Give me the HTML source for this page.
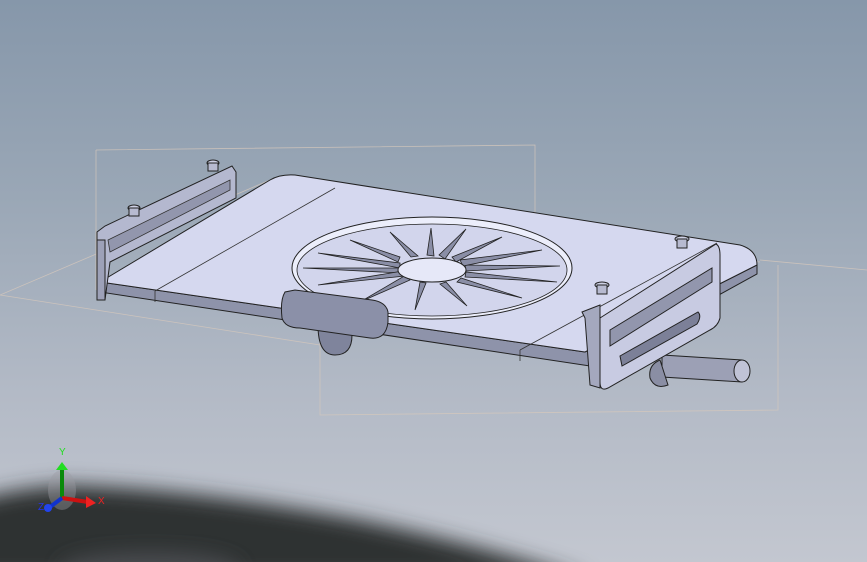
<!DOCTYPE html>
<html><head><meta charset="utf-8"><style>
html,body{margin:0;padding:0;width:867px;height:562px;overflow:hidden}
body{background:linear-gradient(180deg,#8697aa 0%,#9aa7b6 35%,#b3bac6 70%,#c3c7d0 100%)}
svg{position:absolute;left:0;top:0}
</style></head><body>
<svg width="867" height="562" viewBox="0 0 867 562" xmlns="http://www.w3.org/2000/svg">
<defs>
<filter id="bl" x="-50%" y="-50%" width="200%" height="200%"><feGaussianBlur stdDeviation="10"/></filter>
</defs>
<!-- shadow -->
<path d="M-40 580 L-40 505 Q10 488 70 485 Q200 490 360 520 Q480 545 590 580 Z" fill="#2e3033" filter="url(#bl)"/>
<ellipse cx="150" cy="570" rx="90" ry="18" fill="#4a4c50" filter="url(#bl)"/>
<!-- bounding lines -->
<g stroke="#d6c8bc" stroke-width="0.8" fill="none" opacity="0.8">
<path d="M96 150 L535 145 L535 240"/>
<path d="M96 150 L96 290"/>
<path d="M0 295 L270 180"/>
<path d="M320 300 L320 415 L778 410 L778 265"/>
<path d="M0 295 L320 345"/>
<path d="M760 260 L867 270"/>
<path d="M535 240 L760 262"/>
</g>
<!-- plate edge -->
<path d="M100 282 L585 352 L757 265 L757 274 L590 366 L100 292 Z" fill="#8e93aa" stroke="#222" stroke-width="1"/>
<!-- plate top -->
<path d="M100 282 L270 180 Q280 174 295 175 L740 245 Q757 250 757 265 L585 352 Z" fill="#d5d8ef" stroke="#222" stroke-width="1"/>
<path d="M155 291 L335 188" stroke="#333" stroke-width="0.8"/>
<path d="M520 350 L717 243" stroke="#333" stroke-width="0.8"/>
<path d="M155 291 L155 302 M520 350 L520 361" stroke="#333" stroke-width="0.8"/>
<!-- fan -->
<ellipse cx="432" cy="268" rx="140" ry="51" fill="#eceefb" stroke="#222" stroke-width="1"/>
<ellipse cx="432" cy="270" rx="135" ry="46" fill="#d2d5ec" stroke="#222" stroke-width="0.8"/>
<g stroke="#222" stroke-width="0.8" fill="#8a8ea6">
<path d="M350 240 L398 262 L400 257 Z"/>
<path d="M318 253 L400 268 L400 263 Z"/>
<path d="M303 268 L400 273 L400 268 Z"/>
<path d="M318 285 L405 276 L403 271 Z"/>
<path d="M360 302 L410 280 L406 275 Z"/>
<path d="M415 310 L426 283 L420 282 Z"/>
<path d="M467 306 L446 282 L440 284 Z"/>
<path d="M522 298 L461 278 L457 282 Z"/>
<path d="M557 282 L466 272 L465 277 Z"/>
<path d="M560 266 L465 265 L466 271 Z"/>
<path d="M542 250 L460 260 L463 266 Z"/>
<path d="M502 237 L452 257 L456 262 Z"/>
<path d="M466 229 L439 255 L445 259 Z"/>
<path d="M431 228 L427 255 L434 256 Z"/>
<path d="M390 232 L411 257 L418 256 Z"/>
</g>
<ellipse cx="432" cy="270" rx="34" ry="12" fill="#e6e8f8" stroke="#222" stroke-width="1"/>
<!-- front tab -->
<path d="M318 325 Q318 355 335 355 Q352 355 352 335 Z" fill="#7f849c" stroke="#222"/>
<path d="M285 292 Q280 300 282 318 Q285 328 300 328 L370 338 Q386 340 388 322 L388 312 Q386 302 372 300 L295 290 Z" fill="#8b90a8" stroke="#222"/>
<!-- left bracket -->
<path d="M97 232 L105 226 L232 166 L236 172 L236 198 L110 262 L105 300 L97 300 Z" fill="#b4b8cf" stroke="#222"/>
<path d="M108 240 L230 180 L230 190 L110 252 Z" fill="#9296ad" stroke="#333" stroke-width="0.8"/>
<rect x="97" y="240" width="8" height="60" fill="#9da1b8" stroke="#222"/>
<ellipse cx="213" cy="163" rx="6" ry="3" fill="#cdd0e4" stroke="#222"/>
<rect x="208" y="163" width="10" height="8" fill="#b7bad0" stroke="#222"/>
<ellipse cx="134" cy="208" rx="6" ry="3" fill="#cdd0e4" stroke="#222"/>
<rect x="129" y="208" width="10" height="8" fill="#b7bad0" stroke="#222"/>
<!-- rod -->
<path d="M662 355 L742 360 L742 382 L662 377 Z" fill="#9ca0b5" stroke="#222"/>
<ellipse cx="742" cy="371" rx="8" ry="11" fill="#c0c3d6" stroke="#222"/>
<path d="M660 360 Q648 365 650 378 Q655 390 668 385 Z" fill="#8a8ea4" stroke="#222"/>
<!-- right bracket -->
<ellipse cx="682" cy="239" rx="7" ry="3" fill="#cdd0e4" stroke="#222"/>
<rect x="677" y="239" width="10" height="9" fill="#b7bad0" stroke="#222"/>
<ellipse cx="602" cy="285" rx="7" ry="3" fill="#cdd0e4" stroke="#222"/>
<rect x="597" y="285" width="10" height="9" fill="#b7bad0" stroke="#222"/>
<path d="M582 312 L600 305 L600 388 L590 385 L585 318 Z" fill="#a4a8be" stroke="#222"/>
<path d="M600 318 L716 244 Q720 246 720 255 L720 318 Q718 326 710 330 L608 388 Q600 392 600 382 Z" fill="#c8cbe2" stroke="#222"/>
<path d="M610 330 L712 268 L712 282 L610 346 Z" fill="#9296ad" stroke="#222"/>
<path d="M620 356 L698 312 Q702 316 697 324 L622 366 Z" fill="#7c8098" stroke="#222"/>
<!-- triad -->
<g>
<ellipse cx="62" cy="490" rx="14" ry="20" fill="#9a9ca2" opacity="0.4"/>
<line x1="62" y1="498" x2="62" y2="470" stroke="#0a8a0a" stroke-width="4"/>
<path d="M56 470 L62 462 L68 470 Z" fill="#22dd22"/>
<line x1="62" y1="498" x2="88" y2="502" stroke="#cc1111" stroke-width="4"/>
<path d="M86 496 L96 503 L86 508 Z" fill="#ee2222"/>
<line x1="62" y1="498" x2="50" y2="507" stroke="#1133cc" stroke-width="4"/>
<circle cx="48" cy="508" r="4" fill="#2244ee"/>
<text x="59" y="455" font-family="Liberation Sans, sans-serif" font-size="10" fill="#22dd22">Y</text>
<text x="98" y="504" font-family="Liberation Sans, sans-serif" font-size="10" fill="#ee2222">X</text>
<text x="38" y="510" font-family="Liberation Sans, sans-serif" font-size="10" fill="#2233ee">Z</text>
</g>
</svg>
</body></html>
